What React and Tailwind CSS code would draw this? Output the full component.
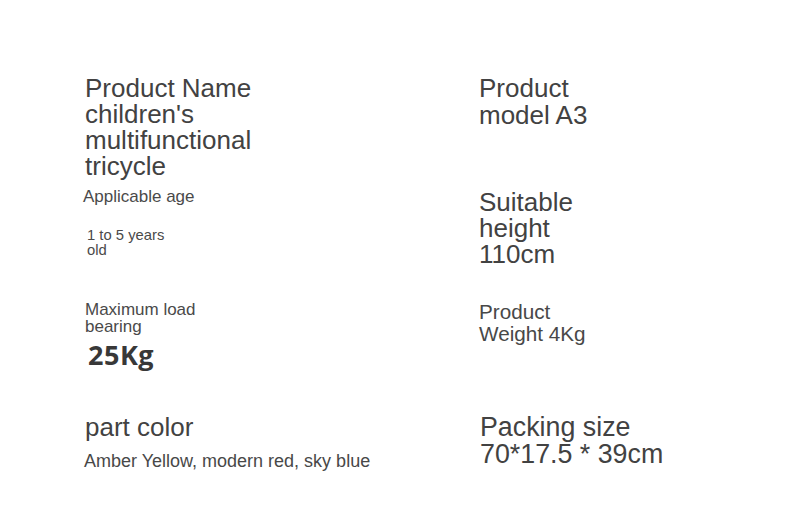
const sans = { fontFamily: '"Liberation Sans", Arial, sans-serif' };

export default function App() {
  return (
    <div
      className="w-[789px] h-[515px] bg-white text-[#424242] overflow-hidden flex pt-[73px] whitespace-nowrap"
      style={sans}
    >
      {/* Left column */}
      <div className="w-[479px] shrink-0 pl-[85px] flex flex-col items-start">
        <div className="mt-[2px] text-[26px] leading-[26px]">
          Product Name
          <br />
          children's
          <br />
          multifunctional
          <br />
          tricycle
        </div>

        <div className="mt-[8px] -ml-[2px] text-[17px] leading-[20px] text-[#4a4a4a]">
          Applicable age
        </div>

        <div className="mt-[21px] ml-[2px] text-[14.8px] leading-[15px] text-[#4a4a4a]">
          1 to 5 years
          <br />
          old
        </div>

        <div className="mt-[43px] text-[17px] leading-[17px] text-[#4a4a4a]">
          Maximum load
          <br />
          bearing
        </div>

        <div
          className="mt-[6px] ml-[3px] text-[27px] leading-[27px] font-bold tracking-[0.5px] text-[#383838]"
          style={{ fontFamily: '"Open Sans", "Noto Sans", sans-serif' }}
        >
          25Kg
        </div>

        <div className="mt-[46px] text-[26px] leading-[26px]">part color</div>

        <div className="mt-[11px] -ml-[1px] text-[18px] leading-[20px] text-[#484848]">
          Amber Yellow, modern red, sky blue
        </div>
      </div>

      {/* Right column */}
      <div className="flex flex-col items-start pt-[2px]">
        <div className="text-[26px] leading-[27px]">
          Product
          <br />
          model A3
        </div>

        <div className="mt-[60px] text-[26px] leading-[26px]">
          Suitable
          <br />
          height
          <br />
          110cm
        </div>

        <div className="mt-[34px] text-[20.7px] leading-[21.5px] text-[#484848]">
          Product
          <br />
          Weight 4Kg
        </div>

        <div className="mt-[70px] ml-[1px] text-[26.8px] leading-[26.7px]">
          Packing size
          <br />
          70*17.5 * 39cm
        </div>
      </div>
    </div>
  );
}
